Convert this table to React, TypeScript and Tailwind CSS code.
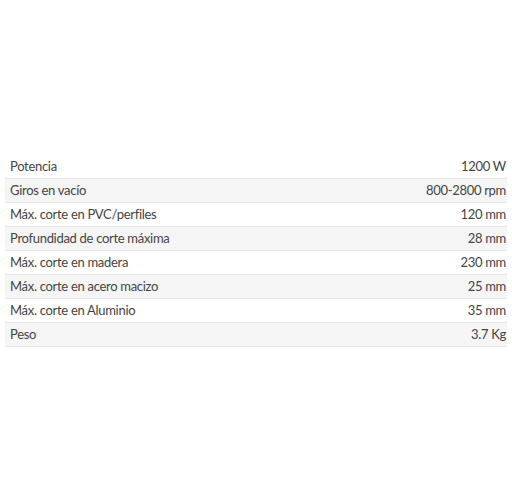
const rows: [string, string][] = [
  ["Potencia", "1200 W"],
  ["Giros en vacío", "800-2800 rpm"],
  ["Máx. corte en PVC/perfiles", "120 mm"],
  ["Profundidad de corte máxima", "28 mm"],
  ["Máx. corte en madera", "230 mm"],
  ["Máx. corte en acero macizo", "25 mm"],
  ["Máx. corte en Aluminio", "35 mm"],
  ["Peso", "3.7 Kg"],
];

export default function App() {
  return (
    <div className="w-[512px] h-[504px] bg-white pt-[155px] px-[5px]" style={{ fontFamily: "Lato, 'Open Sans', sans-serif" }}>
      <div className="flex flex-col">
        {rows.map(([k, v], i) => (
          <div
            key={k}
            className={`h-[24px] flex items-center justify-between pl-[5px] pr-[1px] pt-[1px] text-[13px] tracking-[-0.3px] text-[#444] border-b border-[#e6e6e6] ${
              i % 2 === 1 ? "bg-[#f5f5f5]" : "bg-white"
            }`}
          >
            <span>{k}</span>
            <span>{v}</span>
          </div>
        ))}
      </div>
    </div>
  );
}
